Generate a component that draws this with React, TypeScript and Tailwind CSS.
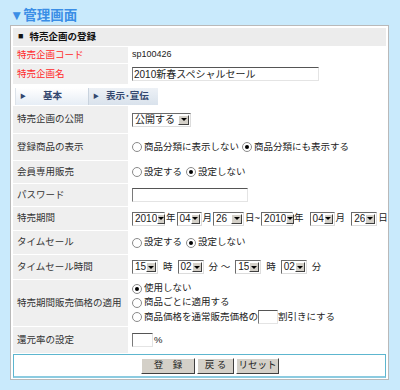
import React from 'react';

// ─── Classic form widgets ─────────────────────────────
function Sel({ v, className }: { v: string; className: string }) {
  return (
    <span
      className={`inline-flex shrink-0 items-center justify-between h-[14px] bg-white border border-t-[#6b6b6b] border-l-[#6b6b6b] border-r-[#dcdcdc] border-b-[#dcdcdc] pl-[2px] pr-[1px] leading-none align-middle ${className}`}
    >
      <span className="text-[10px]">{v}</span>
      <span className="flex items-center justify-center w-[11px] h-[10px] bg-[#d4d0c8] border border-t-white border-l-white border-r-[#404040] border-b-[#404040]">
        <span className="w-0 h-0 border-x-[3px] border-x-transparent border-t-[3px] border-t-black" />
      </span>
    </span>
  );
}

function Radio({ on }: { on?: boolean }) {
  return (
    <span className="inline-flex shrink-0 items-center justify-center w-[10px] h-[10px] rounded-full bg-white border border-[#8a8a8a] mr-[2px] align-middle">
      {on && <span className="w-[4px] h-[4px] rounded-full bg-black" />}
    </span>
  );
}

function Input({ className }: { className: string }) {
  return (
    <span
      className={`inline-block shrink-0 h-[14px] bg-white border border-t-[#555] border-l-[#7a7a7a] border-r-[#e4e4e4] border-b-[#e4e4e4] align-middle ${className}`}
    />
  );
}

function Btn({ label, className }: { label: string; className: string }) {
  return (
    <span
      className={`flex items-center justify-center h-[16px] bg-[#d4d0c8] border border-t-white border-l-white border-r-[#404040] border-b-[#404040] text-[9.5px] ${className}`}
    >
      {label}
    </span>
  );
}

function Row({
  label,
  h,
  red,
  children,
}: {
  label: string;
  h: string;
  red?: boolean;
  children: React.ReactNode;
}) {
  return (
    <div className={`grid grid-cols-[115px_1fr] gap-x-[2px] mb-[1px] ${h}`}>
      <div className={`flex items-center pl-[4px] bg-[#efefef] ${red ? 'text-[#ff2a2a]' : 'text-[#333]'}`}>
        {label}
      </div>
      <div className="flex items-center pl-[2px] bg-white whitespace-nowrap">{children}</div>
    </div>
  );
}

export default function App() {
  return (
    <div className="w-[400px] h-[390px] bg-[#c9eafc] pl-[10px] pt-[6px] font-['Liberation_Sans','Noto_Sans_CJK_JP',sans-serif] text-[9.5px] text-[#222] overflow-hidden">
      <div className="h-[19px] flex items-center text-[13.5px] font-bold text-[#3a8ee6] leading-none">
        ▼管理画面
      </div>

      <div className="w-[379px] bg-white border border-[#b9b9b9] px-[2px] pt-[2px] pb-[1px]">
        {/* Header */}
        <div className="h-[18px] bg-[#ececec] flex items-center pl-[5px] font-bold text-[#111] mb-[1px]">
          <span className="mr-[6px] text-[9px]">■</span>特売企画の登録
        </div>

        <Row label="特売企画コード" h="h-[16px]" red>
          <span className="text-[9px]">sp100426</span>
        </Row>
        <Row label="特売企画名" h="h-[20px]" red>
          <span className="flex items-center h-[14px] w-[187px] bg-white border border-t-[#555] border-l-[#7a7a7a] border-r-[#e4e4e4] border-b-[#e4e4e4] pl-[1px] text-[10px]">
            2010新春スペシャルセール
          </span>
        </Row>

        {/* Tabs */}
        <div className="h-[21px] pt-[3px] pl-[2px] flex">
          <div className="w-[73px] h-[17px] flex items-center bg-gradient-to-b from-white to-[#e6edf5] border-l border-[#dde3ea] text-[#33476e] font-bold">
            <span className="ml-[4px] text-[6px]">▶</span>
            <span className="ml-[17px]">基本</span>
          </div>
          <div className="w-[70px] h-[17px] flex items-center bg-gradient-to-b from-[#edf1f6] to-[#d9e2ec] border-l border-[#c9d3de] text-[#33476e] font-bold">
            <span className="ml-[4px] text-[6px]">▶</span>
            <span className="ml-[7px]">表示･宣伝</span>
          </div>
        </div>

        <Row label="特売企画の公開" h="h-[27px]">
          <Sel v="公開する" className="w-[59px]" />
        </Row>
        <Row label="登録商品の表示" h="h-[26px]">
          <Radio />
          <span className="mr-[3px]">商品分類に表示しない</span>
          <Radio on />
          <span>商品分類にも表示する</span>
        </Row>
        <Row label="会員専用販売" h="h-[22px]">
          <Radio />
          <span className="mr-[4px]">設定する</span>
          <Radio on />
          <span>設定しない</span>
        </Row>
        <Row label="パスワード" h="h-[22px]">
          <Input className="w-[116px]" />
        </Row>
        <Row label="特売期間" h="h-[23px]">
          <Sel v="2010" className="w-[33px]" />
          <span className="mx-[1px]">年</span>
          <Sel v="04" className="w-[25px]" />
          <span className="mx-[1px]">月</span>
          <Sel v="26" className="w-[31px]" />
          <span className="mx-[1px]">日~</span>
          <Sel v="2010" className="w-[32px]" />
          <span className="ml-[1px] mr-[6px]">年</span>
          <Sel v="04" className="w-[25px]" />
          <span className="ml-[1px] mr-[6px]">月</span>
          <Sel v="26" className="w-[26px]" />
          <span className="ml-[1px]">日</span>
        </Row>
        <Row label="タイムセール" h="h-[23px]">
          <Radio />
          <span className="mr-[4px]">設定する</span>
          <Radio on />
          <span>設定しない</span>
        </Row>
        <Row label="タイムセール時間" h="h-[24px]">
          <Sel v="15" className="w-[26px]" />
          <span className="mx-[5px]">時</span>
          <Sel v="02" className="w-[26px]" />
          <span className="mx-[5px]">分 ～</span>
          <Sel v="15" className="w-[26px]" />
          <span className="mx-[5px]">時</span>
          <Sel v="02" className="w-[26px]" />
          <span className="ml-[5px]">分</span>
        </Row>
        <div className="grid grid-cols-[115px_1fr] gap-x-[2px] mb-[1px] h-[46px]">
          <div className="flex items-center pl-[4px] bg-[#efefef] text-[#333]">特売期間販売価格の適用</div>
          <div className="flex flex-col justify-center pl-[2px] gap-[1px] whitespace-nowrap">
            <div className="flex items-center h-[13px]">
              <Radio on />
              <span>使用しない</span>
            </div>
            <div className="flex items-center h-[13px]">
              <Radio />
              <span>商品ごとに適用する</span>
            </div>
            <div className="flex items-center h-[14px]">
              <Radio />
              <span>商品価格を通常販売価格の</span>
              <Input className="w-[20px]" />
              <span>割引きにする</span>
            </div>
          </div>
        </div>
        <Row label="還元率の設定" h="h-[26px]">
          <Input className="w-[21px]" />
          <span className="ml-[1px]">%</span>
        </Row>

        {/* Buttons */}
        <div className="h-[24px] border border-[#5db6cf] border-b-2 border-b-[#8ccbe0] flex items-center pl-[127px] gap-[2px]">
          <Btn label="登　録" className="w-[54px]" />
          <Btn label="戻 る" className="w-[37px]" />
          <Btn label="リセット" className="w-[43px]" />
        </div>
      </div>
    </div>
  );
}
